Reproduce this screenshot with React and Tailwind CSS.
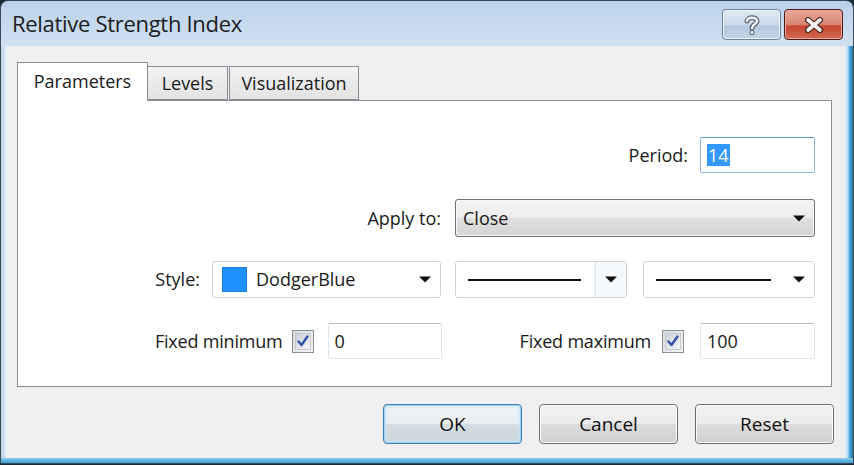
import React from "react";

function Arrow() {
  return (
    <svg width="12" height="7" viewBox="0 0 12 7" className="shrink-0">
      <path d="M0 0.5h12L6 6.5z" fill="#111" />
    </svg>
  );
}

function Check() {
  return (
    <div className="w-[22px] h-[23px] border border-[#8e8f8f] bg-[linear-gradient(135deg,#d8dbe0,#f4f5f7)] flex items-center justify-center shrink-0">
      <div className="w-[16px] h-[17px] border border-[#c4c7cc] bg-[linear-gradient(135deg,#cdd1d8,#f5f6f8)] flex items-center justify-center">
        <svg width="14" height="14" viewBox="0 0 14 14">
          <path d="M2.5 7.5 L5.5 11 L11.5 2.5" fill="none" stroke="#3552a7" strokeWidth="2.4" strokeLinecap="round" strokeLinejoin="round" />
        </svg>
      </div>
    </div>
  );
}

function Input({ w, children, focus }) {
  return (
    <div
      className={`h-[36px] ${w} bg-white rounded-[2px] border flex items-center pl-[6px] ${
        focus
          ? "border-[#8cb8e3] border-t-[#5d95cf]"
          : "border-[#e1e6ec] border-t-[#b9bec5]"
      }`}
    >
      {children}
    </div>
  );
}

function Btn({ children, def }) {
  return (
    <div
      className={`w-[139px] h-[40px] rounded-[4px] border flex items-center justify-center text-[19px] text-[#111] ${
        def
          ? "border-[#3c7fb1] shadow-[inset_0_0_0_1px_#9fd2ef,inset_0_0_3px_2px_#c8e8f9] bg-[linear-gradient(to_bottom,#f0f3f6_0%,#e8edf1_50%,#d6dde3_50%,#cbd3da_100%)]"
          : "border-[#707070] shadow-[inset_0_0_0_1px_#fbfbfb] bg-[linear-gradient(to_bottom,#f2f2f2_0%,#ebebeb_50%,#dddddd_50%,#cfcfcf_100%)]"
      }`}
    >
      {children}
    </div>
  );
}

export default function App() {
  return (
    <div className="w-[854px] h-[465px] overflow-hidden bg-[#1d2a35] font-['Open_Sans',sans-serif] text-[#1a1a1a]">
      <div className="w-[854px] h-[464px] flex flex-col border border-[#3b4a58] rounded-t-[8px] overflow-hidden bg-[linear-gradient(to_bottom,#bcd2ea,#d2e2f2_50px,#d5e5f3)]">
        {/* Title bar */}
        <div className="h-[45px] flex items-start shrink-0">
          <div className="pl-[11px] pt-[7px] text-[22px] tracking-[-0.3px] text-[#1c1c1c] leading-[30px]">
            Relative Strength Index
          </div>
          <div className="ml-auto mt-[8px] mr-[10px] flex gap-[3px]">
            <div className="w-[59px] h-[31px] rounded-[4px] border border-[#6f8299] shadow-[inset_0_0_0_1px_#eef4fa] bg-[linear-gradient(to_bottom,#e1eaf4_0%,#ccdaea_50%,#b3c8df_55%,#c3d5e8_100%)] flex items-center justify-center">
              <svg width="18" height="22" viewBox="0 0 18 22">
                <path d="M4 7 C4 3 14 2.5 14 7 C14 10.5 9 10 9 14" fill="none" stroke="#5b6877" strokeWidth="5" strokeLinecap="round" />
                <path d="M4 7 C4 3 14 2.5 14 7 C14 10.5 9 10 9 14" fill="none" stroke="#f4f7fa" strokeWidth="2.4" strokeLinecap="round" />
                <circle cx="9" cy="18.5" r="2.6" fill="#5b6877" />
                <circle cx="9" cy="18.5" r="1.4" fill="#f4f7fa" />
              </svg>
            </div>
            <div className="w-[59px] h-[31px] rounded-[4px] border border-[#4d1a14] shadow-[inset_0_0_0_1px_#eba99c] bg-[linear-gradient(to_bottom,#e9a99b_0%,#d98572_50%,#c4452f_55%,#d26a4f_100%)] flex items-center justify-center">
              <svg width="22" height="16" viewBox="0 0 22 16">
                <path d="M5 3 L17 13 M17 3 L5 13" stroke="#3d2320" strokeWidth="6" strokeLinecap="round" />
                <path d="M5 3 L17 13 M17 3 L5 13" stroke="#f7f2f1" strokeWidth="3.6" strokeLinecap="round" />
              </svg>
            </div>
          </div>
        </div>

        {/* Body row */}
        <div className="flex-1 flex min-h-0">
          <div className="w-[5px] shrink-0 bg-[linear-gradient(to_right,#b9cee4,#e0ebf6)]" />
          <div className="flex-1 bg-[#f0f0f0] flex flex-col pt-[15px] pl-[11px] pr-[13px]">
            {/* Tabs */}
            <div className="flex items-end h-[39px]">
              <div className="relative z-10 w-[131px] h-[39px] bg-white border border-b-0 border-[#898c95] flex items-center justify-center text-[18px] -mb-px">
                <span className="-mt-[2px]">Parameters</span>
              </div>
              <div className="w-[80px] h-[34px] border border-l-0 border-[#898c95] bg-[linear-gradient(to_bottom,#f2f2f2,#e3e3e3)] flex items-center justify-center text-[18px]">
                Levels
              </div>
              <div className="w-[130px] h-[34px] ml-[1px] border border-[#898c95] bg-[linear-gradient(to_bottom,#f2f2f2,#e3e3e3)] flex items-center justify-center text-[18px]">
                Visualization
              </div>
            </div>

            {/* Panel */}
            <div className="h-[287px] bg-white border border-[#898c95] flex flex-col pt-[36px] pr-[16px] text-[18px]">
              {/* Period */}
              <div className="flex justify-end items-center h-[36px]">
                <span className="mr-[12px]">Period:</span>
                <Input w="w-[115px]" focus>
                  <span className="bg-[#3399ff] text-white leading-[22px] px-[1px]">14</span>
                </Input>
              </div>

              {/* Apply to */}
              <div className="flex justify-end items-center h-[38px] mt-[26px]">
                <span className="mr-[14px]">Apply to:</span>
                <div className="w-[360px] h-[38px] rounded-[3px] border border-[#707070] shadow-[inset_0_0_0_1px_#f8f8f8] bg-[linear-gradient(to_bottom,#f4f4f4_0%,#ededed_50%,#e0e0e0_50%,#d4d4d4_100%)] flex items-center pl-[7px] pr-[9px]">
                  <span className="flex-1">Close</span>
                  <Arrow />
                </div>
              </div>

              {/* Style */}
              <div className="flex justify-end items-center h-[37px] mt-[24px]">
                <span className="mr-[12px]">Style:</span>
                <div className="w-[229px] h-[37px] rounded-[3px] border border-[#cfd3d9] bg-white flex items-center pl-[9px] pr-[9px]">
                  <div className="w-[25px] h-[25px] bg-[#1e90ff] border border-[#1a7ee0]" />
                  <span className="ml-[9px] flex-1">DodgerBlue</span>
                  <Arrow />
                </div>
                <div className="w-[172px] h-[37px] ml-[14px] rounded-[3px] border border-[#cfd3d9] bg-white flex items-center">
                  <div className="flex-1 flex items-center pl-[12px] pr-[14px]">
                    <div className="h-[2px] flex-1 bg-[#111]" />
                  </div>
                  <div className="w-[31px] h-full border-l border-[#dfe4ea] bg-[#f6f9fc] rounded-r-[3px] flex items-center justify-center">
                    <Arrow />
                  </div>
                </div>
                <div className="w-[172px] h-[37px] ml-[16px] rounded-[3px] border border-[#cfd3d9] bg-white flex items-center pl-[12px] pr-[9px]">
                  <div className="h-[2px] flex-1 bg-[#111] mr-[22px]" />
                  <Arrow />
                </div>
              </div>

              {/* Fixed min / max */}
              <div className="flex justify-end items-center h-[36px] mt-[25px]">
                <span className="mr-[9px] tracking-[-0.2px]">Fixed minimum</span>
                <Check />
                <div className="ml-[14px]">
                  <Input w="w-[114px]">0</Input>
                </div>
                <span className="ml-[78px] mr-[11px] tracking-[-0.2px]">Fixed maximum</span>
                <Check />
                <div className="ml-[16px]">
                  <Input w="w-[115px]">100</Input>
                </div>
              </div>
            </div>

            {/* Buttons */}
            <div className="flex justify-end gap-[17px] mt-[17px] -mr-[2px]">
              <Btn def>OK</Btn>
              <Btn>Cancel</Btn>
              <Btn>Reset</Btn>
            </div>
          </div>
          <div className="w-[8px] shrink-0 bg-[linear-gradient(to_right,#e6f1f9,#bfe0f3_30%,#43a8da_60%,#2a6f97)]" />
        </div>
        <div className="h-[5px] shrink-0 bg-[linear-gradient(to_bottom,#8ecbe9,#3aa0d5)]" />
      </div>
    </div>
  );
}
